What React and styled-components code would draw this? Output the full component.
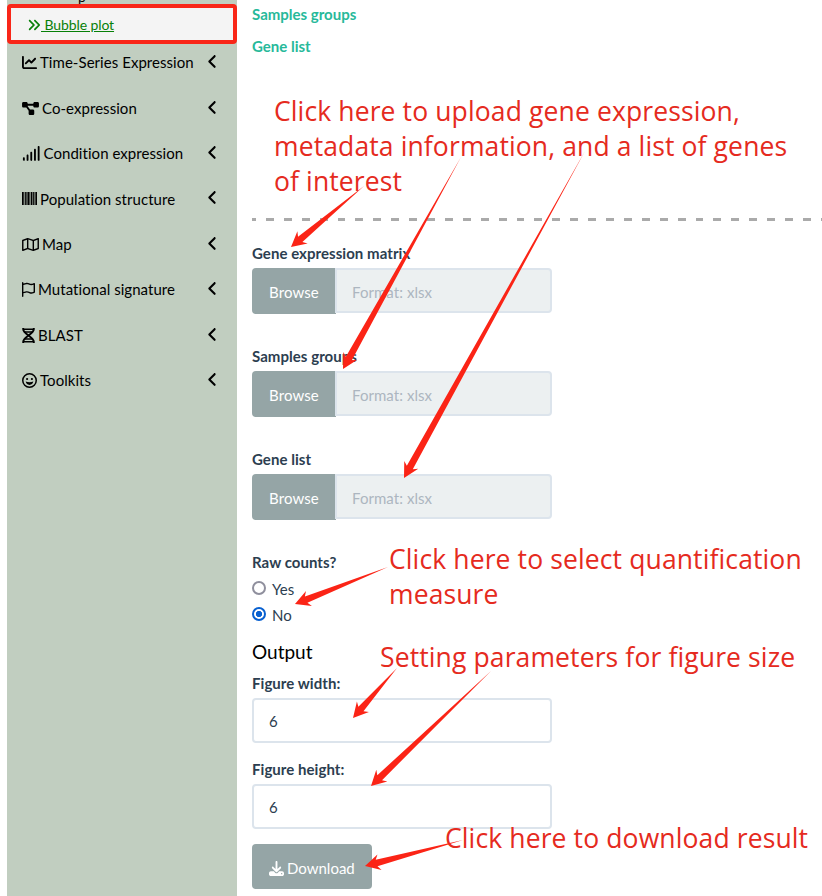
import React from 'react';
import styled, { createGlobalStyle } from 'styled-components';
import { FaAnglesRight, FaChartLine, FaDiagramProject, FaSignal, FaRegMap, FaRegFlag, FaDownload, FaAngleLeft } from 'react-icons/fa6';

const Global = createGlobalStyle`
  * { box-sizing: border-box; }
  html, body { margin: 0; height: 896px; overflow: hidden; background: #fff; }
  body { font-family: Lato, sans-serif; font-size: 15px; line-height: 22.5px; color: #2c3e50; }
`;
const Page = styled.div`
  position: relative;
  display: flex;
  width: 822px;
  height: 896px;
  padding-left: 7px;
  overflow: hidden;
`;
const Sidebar = styled.nav`
  width: 230px;
  height: 896px;
  flex: none;
  background: #c1cec0;
  color: #000;
`;
const CutItem = styled.div`
  height: 4px;
  padding-left: 71px;
  display: flex;
  align-items: flex-end;
  font-size: 14px;
  line-height: 14px;
  overflow: hidden;
`;
const ActiveItem = styled.a`
  display: flex;
  align-items: center;
  height: 40px;
  padding: 2px 0 0 16px;
  border: 4px solid #f92618;
  border-radius: 4px;
  background: #f4f4f4;
  color: #088008;
  font-size: 14px;
  letter-spacing: -0.1px;
  span { text-decoration: underline; white-space: pre; }
`;
const Menu = styled.div`
  display: flex;
  flex-direction: column;
  margin-top: -4px;
`;
const MenuItem = styled.div`
  display: flex;
  align-items: center;
  height: 45.4px;
  padding: 0 19px 0 15px;
  gap: 3px;
  svg { flex: none; }
`;
const MenuIcon = styled.span`
  display: flex;
  width: ${(p) => p.$width}px;
  svg { width: 100%; height: 15px; }
`;
const MenuLabel = styled.span`
  flex: 1;
  white-space: nowrap;
  letter-spacing: 0.05px;
`;
const Chevron = styled(FaAngleLeft)`
  width: 11px;
  height: 17px;
  margin-bottom: 2px;
`;
const Main = styled.main`
  flex: 1;
  padding: 3px 0 0 15px;
`;
const SectionLink = styled.a`
  display: block;
  height: 22px;
  margin-bottom: 10px;
  color: #27b99a;
  font-weight: 700;
`;
const Dashes = styled.div`
  height: 3px;
  margin: 161px 0 21px;
  background: repeating-linear-gradient(to right, #aaa 0 4px, transparent 4px 14px, #aaa 14px 17.9px);
`;
const Label = styled.label`
  display: block;
  height: 22px;
  margin-bottom: ${(p) => (p.$tight ? 3 : 4)}px;
  font-weight: 700;
  letter-spacing: 0.05px;
`;
const FileRow = styled.div`
  display: flex;
  width: 300px;
  height: 46px;
  margin-bottom: 31px;
`;
const Browse = styled.button`
  width: 84px;
  height: 46px;
  padding: 2px 0 0;
  border: 0;
  border-radius: 4px 0 0 4px;
  background: #95a5a6;
  color: #fff;
  font: 15px Lato, sans-serif;
  letter-spacing: 0.1px;
`;
const FileName = styled.div`
  flex: 1;
  height: 45px;
  margin-left: -1px;
  padding: 11px 15px;
  border: 2px solid #dce4ec;
  border-radius: 0 4px 4px 0;
  background: #ecf0f1;
  color: #acb6c0;
  letter-spacing: 0.06px;
`;
const RadioRow = styled.div`
  display: flex;
  align-items: center;
  gap: 6px;
  height: 26px;
`;
const Radio = styled.span`
  width: 14px;
  height: 14px;
  margin-bottom: 2px;
  border: 2px solid ${(p) => (p.$on ? '#0860d0' : '#8f8f9d')};
  border-radius: 50%;
  background: ${(p) => (p.$on ? 'radial-gradient(circle, #0860d0 0 2.8px, #fff 3.5px)' : '#fff')};
`;
const Heading = styled.h4`
  height: 24px;
  margin: 12px 0 8px;
  color: #000;
  font-size: 19px;
  font-weight: 400;
  line-height: 24px;
`;
const NumberBox = styled.div`
  width: 300px;
  height: 45px;
  margin-bottom: 15px;
  padding: 10px 15px;
  border: 2px solid #dce4ec;
  border-radius: 4px;
  background: #fff;
`;
const Download = styled.button`
  display: flex;
  align-items: center;
  gap: 3px;
  width: 120px;
  height: 45px;
  padding: 3px 0 0 17px;
  border: 0;
  border-radius: 4px;
  background: #95a5a6;
  color: #fff;
  font: 15px Lato, sans-serif;
`;
const Note = styled.div`
  position: absolute;
  left: ${(p) => p.$x}px;
  top: ${(p) => p.$y}px;
  color: #e52a20;
  font: 26.5px/35px "Open Sans", sans-serif;
  letter-spacing: 0.12px;
  white-space: nowrap;
`;
const NoteLine = styled.span`
  display: block;
`;
const Arrows = styled.svg`
  position: absolute;
  inset: 0;
  fill: #fb2416;
  pointer-events: none;
`;

function SignalIcon() {
  return <FaSignal preserveAspectRatio="none" />;
}
function BarcodeIcon() {
  return (
    <svg viewBox="0 0 15 15" fill="#000">
      <path fillOpacity=".35" d="M0 1h15v13H0z" />
      <path d="M0 1h1.6v13H0zM3.2 1h1.2v13H3.2zM5.6 1h1.8v13H5.6zM9 1h1.2v13H9zM11.2 1h1v13h-1zM13.5 1H15v13h-1.5z" />
    </svg>
  );
}
function HelixIcon() {
  return (
    <svg viewBox="0 0 13 15" fill="none" stroke="#000">
      <path strokeWidth="1.9" d="M1.2 0v1.2C1.2 6 11.8 9 11.8 13.8V15M11.8 0v1.2C11.8 6 1.2 9 1.2 13.8V15" />
      <path strokeWidth="1.5" d="M1 1.2h11M2.2 4h8.6M2.2 11h8.6M1 13.8h11" />
    </svg>
  );
}
function SmileIcon() {
  return (
    <svg viewBox="0 0 15 15" fill="#000">
      <circle cx="7.5" cy="7.5" r="6.75" fill="none" stroke="#000" strokeWidth="1.5" />
      <circle cx="5.1" cy="6" r="1.1" />
      <circle cx="9.9" cy="6" r="1.1" />
      <path d="M3.7 8.6c2.3.7 5.3.7 7.6 0-.3 2-1.8 3.3-3.8 3.3S4 10.600 3.700 8.600z" />
    </svg>
  );
}

const items = [
  ['Time-Series Expression', FaChartLine, 15],
  ['Co-expression', FaDiagramProject, 17],
  ['Condition expression', SignalIcon, 18.5],
  ['Population structure', BarcodeIcon, 15],
  ['Map', FaRegMap, 17],
  ['Mutational signature', FaRegFlag, 13],
  ['BLAST', HelixIcon, 13],
  ['Toolkits', SmileIcon, 15],
];
const notes = [
  [274, 94, ['Click here to upload gene expression,', 'metadata information, and a list of genes', 'of interest']],
  [389, 542, ['Click here to select quantification', 'measure']],
  [380, 640, ['Setting parameters for figure size']],
  [445, 821, ['Click here to download result']],
];
// Each arrow runs from its thin tail to its tip.
const arrows = [
  [364, 186, 291, 247],
  [461, 157, 343, 369],
  [585, 151, 404, 478],
  [388, 567, 295, 604],
  [397, 668, 353, 718],
  [491, 671, 371, 786],
  [463, 840, 365, 866],
];
function arrowPath([x1, y1, x2, y2]) {
  const length = Math.hypot(x2 - x1, y2 - y1);
  const ux = (x2 - x1) / length;
  const uy = (y2 - y1) / length;
  const at = (back, side) => `${x2 - ux * back - uy * side},${y2 - uy * back + ux * side}`;
  return `M${x1},${y1} L${at(12, 3.4)} L${at(15, 8)} L${x2},${y2} L${at(15, -8)} L${at(12, -3.4)} Z`;
}
function FileField({ label }) {
  return (
    <>
      <Label>{label}</Label>
      <FileRow><Browse>Browse</Browse><FileName>Format: xlsx</FileName></FileRow>
    </>
  );
}

export default function App() {
  return (
    <Page>
      <Global />
      <Sidebar>
        <CutItem>p</CutItem>
        <ActiveItem><FaAnglesRight size={14} /><span> Bubble plot</span></ActiveItem>
        <Menu>
          {items.map(([name, Icon, width]) => (
            <MenuItem key={name}>
              <MenuIcon $width={width}><Icon /></MenuIcon>
              <MenuLabel>{name}</MenuLabel>
              <Chevron />
            </MenuItem>
          ))}
        </Menu>
      </Sidebar>
      <Main>
        <SectionLink>Samples groups</SectionLink>
        <SectionLink>Gene list</SectionLink>
        <Dashes />
        <FileField label="Gene expression matrix" />
        <FileField label="Samples groups" />
        <FileField label="Gene list" />
        <Label $tight>Raw counts?</Label>
        <RadioRow><Radio />Yes</RadioRow>
        <RadioRow><Radio $on />No</RadioRow>
        <Heading>Output</Heading>
        <Label>Figure width:</Label>
        <NumberBox>6</NumberBox>
        <Label>Figure height:</Label>
        <NumberBox>6</NumberBox>
        <Download><FaDownload size={15} />Download</Download>
      </Main>
      {notes.map(([x, y, lines]) => (
        <Note key={y} $x={x} $y={y}>
          {lines.map((text) => <NoteLine key={text}>{text}</NoteLine>)}
        </Note>
      ))}
      <Arrows width="822" height="896">
        {arrows.map((a) => <path key={a.join()} d={arrowPath(a)} />)}
      </Arrows>
    </Page>
  );
}
